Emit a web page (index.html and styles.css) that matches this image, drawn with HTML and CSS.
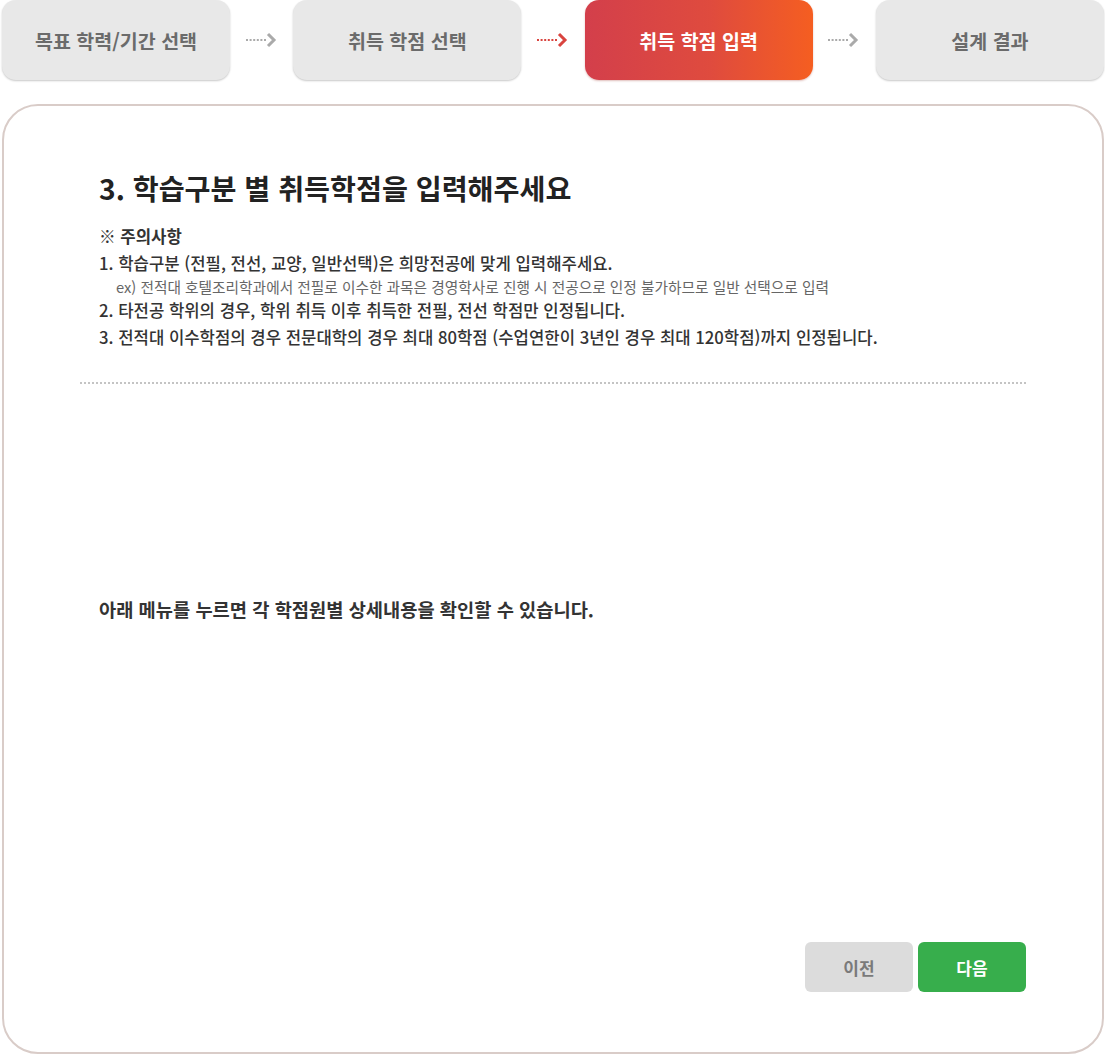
FILE: index.html
```html
<!DOCTYPE html>
<html lang="ko">
<head>
<meta charset="utf-8">
<title>취득 학점 입력</title>
<link rel="stylesheet" href="styles.css">
</head>
<body>
<div class="page">
  <div class="steps">
    <div class="step">목표 학력/기간 선택</div>
    <div class="arrow">
      <svg width="34" height="16" viewBox="0 0 34 16"><line x1="1" y1="8" x2="22" y2="8" stroke="#aaaaaa" stroke-width="2" stroke-dasharray="2 1.6"/><polyline points="23,2 29,8 23,14" fill="none" stroke="#aaaaaa" stroke-width="3"/></svg>
    </div>
    <div class="step">취득 학점 선택</div>
    <div class="arrow">
      <svg width="34" height="16" viewBox="0 0 34 16"><line x1="1" y1="8" x2="22" y2="8" stroke="#d9443f" stroke-width="2" stroke-dasharray="2 1.6"/><polyline points="23,2 29,8 23,14" fill="none" stroke="#d9443f" stroke-width="3"/></svg>
    </div>
    <div class="step step-active">취득 학점 입력</div>
    <div class="arrow">
      <svg width="34" height="16" viewBox="0 0 34 16"><line x1="1" y1="8" x2="22" y2="8" stroke="#aaaaaa" stroke-width="2" stroke-dasharray="2 1.6"/><polyline points="23,2 29,8 23,14" fill="none" stroke="#aaaaaa" stroke-width="3"/></svg>
    </div>
    <div class="step">설계 결과</div>
  </div>

  <div class="card">
    <h1 class="title">3. 학습구분 별 취득학점을 입력해주세요</h1>
    <div class="notice">
      <p class="notice-head">※ 주의사항</p>
      <p class="notice-item">1. 학습구분 (전필, 전선, 교양, 일반선택)은 희망전공에 맞게 입력해주세요.</p>
      <p class="notice-ex">ex) 전적대 호텔조리학과에서 전필로 이수한 과목은 경영학사로 진행 시 전공으로 인정 불가하므로 일반 선택으로 입력</p>
      <p class="notice-item">2. 타전공 학위의 경우, 학위 취득 이후 취득한 전필, 전선 학점만 인정됩니다.</p>
      <p class="notice-item">3. 전적대 이수학점의 경우 전문대학의 경우 최대 80학점 (수업연한이 3년인 경우 최대 120학점)까지 인정됩니다.</p>
    </div>
    <div class="divider"></div>
    <p class="menu-guide">아래 메뉴를 누르면 각 학점원별 상세내용을 확인할 수 있습니다.</p>
    <div class="actions">
      <button class="btn btn-prev" type="button">이전</button>
      <button class="btn btn-next" type="button">다음</button>
    </div>
  </div>
</div>
</body>
</html>
```

FILE: styles.css
```css
* { box-sizing: border-box; }
html, body { margin: 0; padding: 0; background: #ffffff; }
body {
  font-family: "Noto Sans CJK KR", "Noto Sans", sans-serif;
  color: #333333;
}
.page {
  width: 1105px;
  padding: 0 1px 0 2px;
}
.steps {
  display: flex;
  align-items: center;
  justify-content: space-between;
  height: 80px;
}
.step {
  width: 228px;
  height: 80px;
  border-radius: 14px;
  background: #e8e8e8;
  box-shadow: 0 1px 2px rgba(0, 0, 0, 0.22);
  display: flex;
  align-items: center;
  justify-content: center;
  font-size: 19.5px;
  font-weight: 700;
  color: #6b6b6b;
}
.step-active {
  background: linear-gradient(90deg, #d33f4b 0%, #df4b3e 55%, #f55e21 100%);
  color: #ffffff;
  box-shadow: 0 1px 2px rgba(150, 40, 30, 0.3);
}
.arrow {
  width: 34px;
  height: 16px;
  display: flex;
}
.arrow svg { display: block; }
.card {
  margin-top: 24px;
  height: 950px;
  border: 2px solid #d9ccc8;
  border-radius: 36px;
  padding: 64px 76px 60px 76px;
  display: flex;
  flex-direction: column;
}
.title {
  margin: 0 0 0 19px;
  font-size: 28.2px;
  font-weight: 700;
  line-height: 36px;
  color: #222222;
}
.notice {
  margin: 17px 0 0 19px;
}
.notice p { margin: 0; }
.notice-head {
  font-size: 16.7px;
  font-weight: 700;
  line-height: 27px;
  color: #333333;
}
.notice-item {
  font-size: 16.7px;
  font-weight: 500;
  line-height: 27px;
  color: #333333;
}
.notice-ex {
  font-size: 14.7px;
  line-height: 20px;
  color: #666666;
  padding-left: 17px;
}
.divider {
  margin-top: 31px;
  border-top: 2px dotted #c4c4c4;
}
.menu-guide {
  margin: 212px 0 0 19px;
  font-size: 18.7px;
  font-weight: 700;
  color: #333333;
  line-height: 26px;
}
.actions {
  margin-top: auto;
  display: flex;
  justify-content: flex-end;
  gap: 5px;
}
.btn {
  width: 108px;
  height: 50px;
  border: none;
  border-radius: 6px;
  font-family: inherit;
  font-size: 17px;
  font-weight: 700;
}
.btn-prev { background: #dcdcdc; color: #7a7a7a; }
.btn-next { background: #37ae4c; color: #ffffff; }
```
